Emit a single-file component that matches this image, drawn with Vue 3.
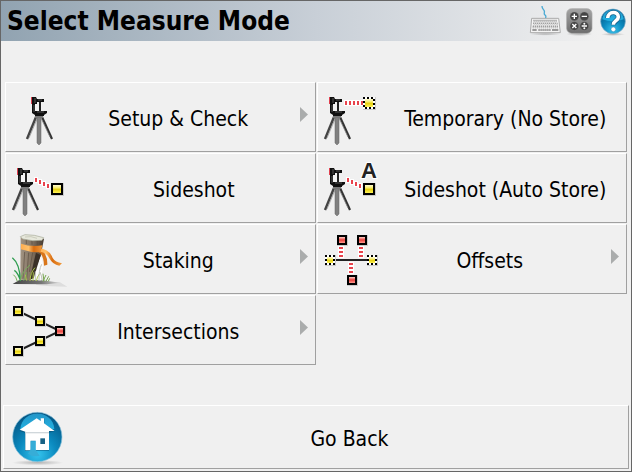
<script setup>
import { ref } from 'vue'

const selected = ref('')

const modes = [
  { id: 'setup', label: 'Setup & Check', submenu: true },
  { id: 'temporary', label: 'Temporary (No Store)', submenu: false },
  { id: 'sideshot', label: 'Sideshot', submenu: false },
  { id: 'auto', label: 'Sideshot (Auto Store)', submenu: false },
  { id: 'staking', label: 'Staking', submenu: true },
  { id: 'offsets', label: 'Offsets', submenu: true },
  { id: 'intersections', label: 'Intersections', submenu: true }
]

// survey points and sight lines drawn in each icon
const points = {
  temporary: [{ x: 46, y: 15, size: 12, color: 'yellow', dashed: true }],
  sideshot: [{ x: 46, y: 30, size: 12, color: 'yellow' }],
  auto: [{ x: 46, y: 30, size: 12, color: 'yellow' }],
  offsets: [
    { x: 20, y: 11, size: 10, color: 'red' },
    { x: 40, y: 11, size: 10, color: 'red' },
    { x: 30, y: 51, size: 10, color: 'red' },
    { x: 8, y: 31, size: 10, color: 'yellow', dashed: true },
    { x: 50, y: 31, size: 10, color: 'yellow', dashed: true }
  ],
  intersections: [
    { x: 8, y: 11, size: 10, color: 'yellow' },
    { x: 30, y: 21, size: 10, color: 'yellow' },
    { x: 50, y: 31, size: 10, color: 'red' },
    { x: 30, y: 41, size: 10, color: 'yellow' },
    { x: 8, y: 51, size: 10, color: 'yellow' }
  ]
}

const slope = [[30, 25], [34, 27], [38, 29], [42, 31]]
const ticks = {
  temporary: { w: 2, h: 4, at: [[28, 19], [32, 19], [36, 19], [40, 19], [44, 19]] },
  sideshot: { w: 2, h: 4, at: slope },
  auto: { w: 2, h: 4, at: slope },
  offsets: {
    w: 4,
    h: 2,
    at: [[22, 23], [22, 27], [22, 31], [42, 23], [42, 27], [42, 31], [32, 39], [32, 43], [32, 47]]
  }
}

const hasTripod = (id) => ['setup', 'temporary', 'sideshot', 'auto'].includes(id)

const select = (id) => {
  selected.value = id
}
</script>

<template>
  <div class="window">
    <svg class="defs" width="0" height="0" aria-hidden="true">
      <defs>
        <linearGradient id="yellow" x2="0" y2="1">
          <stop offset="0" stop-color="#fffbd0" />
          <stop offset=".35" stop-color="#f6ec70" />
          <stop offset=".55" stop-color="#e6cf10" />
          <stop offset="1" stop-color="#fff45a" />
        </linearGradient>
        <linearGradient id="red" x2="0" y2="1">
          <stop offset="0" stop-color="#ffd0c8" />
          <stop offset=".5" stop-color="#e8403c" />
          <stop offset="1" stop-color="#ff9c90" />
        </linearGradient>
        <radialGradient id="blue" cx=".5" cy=".85" r=".85">
          <stop offset="0" stop-color="#35c4ee" />
          <stop offset=".45" stop-color="#0b8abf" />
          <stop offset="1" stop-color="#04527f" />
        </radialGradient>
        <linearGradient id="gloss" x2="0" y2="1">
          <stop offset="0" stop-color="#2496c8" />
          <stop offset="1" stop-color="#22b4e4" />
        </linearGradient>
        <linearGradient id="wood">
          <stop offset="0" stop-color="#a29483" />
          <stop offset=".5" stop-color="#80705f" />
          <stop offset="1" stop-color="#453a30" />
        </linearGradient>
        <linearGradient id="ribbon">
          <stop offset="0" stop-color="#ffad50" />
          <stop offset=".35" stop-color="#ffc06a" />
          <stop offset=".6" stop-color="#d96d10" />
          <stop offset="1" stop-color="#f09a3c" />
        </linearGradient>
        <linearGradient id="metal" x2="0" y2="1">
          <stop offset="0" stop-color="#a5a5a5" />
          <stop offset="1" stop-color="#6d6d6d" />
        </linearGradient>
        <linearGradient id="shade">
          <stop offset="0" stop-color="#444" />
          <stop offset=".6" stop-color="#777" />
          <stop offset="1" stop-color="#ddd" />
        </linearGradient>
        <radialGradient id="ground">
          <stop offset="0" stop-color="#999" stop-opacity=".7" />
          <stop offset="1" stop-color="#999" stop-opacity="0" />
        </radialGradient>
      </defs>
    </svg>

    <header>
      <h1>Select Measure Mode</h1>
      <nav>
        <button class="tool" aria-label="Keyboard">
          <svg width="32" height="32" viewBox="0 0 96 96">
            <path d="M39 3C39 13 44 12 46 18S42 25 48 30S49 35 50 41" fill="none" stroke="#49a9d3" stroke-width="4" />
            <ellipse cx="49" cy="87" rx="46" ry="5" fill="url(#ground)" />
            <path d="M8 40H89L94 83H4Z" fill="#f4f4f4" stroke="#aaa" stroke-width="3" />
            <path d="M13 48H85M12 57H86M11 66H87" stroke="#929292" stroke-width="7" stroke-dasharray="4 2" />
            <path d="M10 75H23M27 75H65M69 75H88" stroke="#999" stroke-width="6" />
            <path d="M13 49H85M12 58H86M11 67H87M28 75H64" stroke="#f4f4f4" stroke-width="3" stroke-dasharray="3 3" />
          </svg>
        </button>
        <button class="tool" aria-label="Calculator">
          <svg width="28" height="32" viewBox="0 0 84 96">
            <ellipse cx="40" cy="87" rx="40" ry="6" fill="url(#ground)" />
            <rect x="2" y="11" width="76" height="74" rx="15" fill="url(#metal)" stroke="#a6a6a6" stroke-width="2" />
            <g fill="#454545" stroke="#888" stroke-width="1">
              <circle cx="25" cy="34" r="13" />
              <circle cx="55" cy="34" r="13" />
              <circle cx="25" cy="63" r="13" />
              <circle cx="55" cy="63" r="13" />
            </g>
            <g stroke="#fff" stroke-width="4">
              <path d="M17 34H33M25 26V42M47 34H63M19 57L31 69M31 57L19 69M47 63H63" />
            </g>
            <g fill="#fff"><circle cx="55" cy="56" r="3" /><circle cx="55" cy="70" r="3" /></g>
          </svg>
        </button>
        <button class="tool" aria-label="Help">
          <svg width="28" height="32" viewBox="0 0 84 96">
            <ellipse cx="42" cy="88" rx="36" ry="5" fill="url(#ground)" />
            <circle cx="42" cy="49" r="37" fill="url(#blue)" stroke="#76abc8" stroke-width="2" />
            <path d="M10 43C14 4 70 4 74 43Q42 55 10 43" fill="url(#gloss)" />
            <path d="M26 39C27 18 58 17 58 36C58 47 43 47 43 61" fill="none" stroke="#145f89" stroke-width="15" />
            <path d="M26 39C27 18 58 17 58 36C58 47 43 47 43 59" fill="none" stroke="#fff" stroke-width="11" />
            <circle cx="43" cy="73" r="7" fill="#fff" stroke="#145f89" stroke-width="1" />
          </svg>
        </button>
      </nav>
    </header>

    <main>
      <button
        v-for="mode in modes"
        :key="mode.id"
        class="tile"
        :class="{ selected: selected === mode.id }"
        @click="select(mode.id)"
      >
        <svg class="icon" width="67" height="68" viewBox="1 1 67 68" aria-hidden="true">
          <g v-if="hasTripod(mode.id)" :transform="mode.id === 'setup' ? 'translate(26 15)' : 'translate(12 15)'">
            <path d="M5 20L-4 42" stroke="#444" stroke-width="2.4" />
            <path d="M6 22L-2 41" stroke="#999" stroke-width=".8" />
            <path d="M11 20L21 42" stroke="#333" stroke-width="2.2" />
            <path d="M10 21L19 40" stroke="#888" stroke-width=".8" />
            <path d="M6 20H10V46L8 48L6 46Z" fill="#808080" stroke="#666" stroke-width=".5" />
            <rect x="4" y="17" width="9" height="2" fill="#111" />
            <rect x="4" y="19" width="8" height="2" fill="#777" />
            <rect x="4" y="6" width="7" height="8" fill="#f4f4f4" />
            <path d="M1 0H5L6 2H13V5H6V7H4V14H16V16L13 18H4L1 16Z" fill="#101010" />
            <rect x="8" y="5" width="2" height="9" fill="#222" />
            <path d="M4 1V6M7 3H11M3 8V15M6 15H13" stroke="#555" fill="none" />
            <rect x="0" y="0" width="1" height="7" fill="#e0404f" />
          </g>

          <g v-if="ticks[mode.id]">
            <rect
              v-for="(t, i) in ticks[mode.id].at"
              :key="'h' + i"
              :x="t[0] - 1"
              :y="t[1] - 1"
              :width="ticks[mode.id].w + 2"
              :height="ticks[mode.id].h + 2"
              fill="#fff"
            />
            <rect
              v-for="(t, i) in ticks[mode.id].at"
              :key="'t' + i"
              :x="t[0]"
              :y="t[1]"
              :width="ticks[mode.id].w"
              :height="ticks[mode.id].h"
              fill="#e8434c"
            />
          </g>

          <path v-if="mode.id === 'offsets'" d="M16 36H52" stroke="#222" stroke-width="2" />
          <path
            v-if="mode.id === 'intersections'"
            d="M13 16L55 36L13 56"
            fill="none"
            stroke="#222"
            stroke-width="2"
          />

          <g v-for="(p, i) in points[mode.id]" :key="i">
            <rect :x="p.x" :y="p.y" :width="p.size + 1" :height="p.size + 1" fill="#ccc" />
            <rect :x="p.x" :y="p.y" :width="p.size" :height="p.size" :fill="p.dashed ? '#fff' : '#000'" />
            <rect
              :x="p.x + 2"
              :y="p.y + 2"
              :width="p.size - 4"
              :height="p.size - 4"
              :fill="`url(#${p.color})`"
            />
            <rect
              v-if="p.dashed"
              :x="p.x + 1"
              :y="p.y + 1"
              :width="p.size - 2"
              :height="p.size - 2"
              fill="none"
              stroke="#000"
              stroke-width="2"
              stroke-dasharray="2 2"
              stroke-dashoffset="1"
            />
          </g>

          <text v-if="mode.id === 'auto'" class="letter" x="52" y="25" text-anchor="middle">A</text>

          <!-- wooden stake with flagging tape, on a grid three times finer -->
          <g v-if="mode.id === 'staking'" transform="translate(-5 -2) scale(.3333)">
            <path d="M105 184L180 181L202 194Q150 194 110 189" fill="#ddd" />
            <path d="M38 186L58 174H120L182 182L140 187Z" fill="url(#shade)" />
            <path d="M90 170L122 100L130 128L122 176Z" fill="#fff" opacity=".8" />
            <path d="M62 46L132 50L122 102L92 175L61 173Z" fill="url(#wood)" />
            <path d="M108 92L89 173L101 169L122 100Z" fill="#3b3027" />
            <path d="M74 90L69 170M86 92L80 172M98 92L88 150M79 52V66M96 52V68M112 54V70" stroke="#5c4e41" stroke-width="2" fill="none" />
            <path d="M61 44L75 38L103 40L131 47L126 55L98 56L68 51Z" fill="#e7e8dc" stroke="#a5a796" stroke-width="2" />
            <path d="M75 45Q93 41 111 49" fill="none" stroke="#bbbdab" stroke-width="2" />
            <path d="M110 86Q131 94 132 131L142 128Q143 94 118 78" fill="#d9761a" />
            <path d="M112 79Q146 78 158 108Q166 121 186 124L178 131Q158 128 148 109Q139 88 112 89" fill="url(#ribbon)" />
            <path d="M63 65Q92 75 127 70L122 91Q91 92 63 82Z" fill="url(#ribbon)" />
            <g fill="none">
              <path d="M61 177Q60 125 37 107M62 177Q53 151 43 145" stroke="#2f9d50" stroke-width="4" />
              <path d="M60 176Q67 147 90 129M71 176Q81 160 79 150M52 178Q48 163 40 158" stroke="#74ac57" stroke-width="3" />
              <path d="M80 176L76 158M90 177Q91 152 105 137M99 177L100 151M109 177Q111 165 119 155" stroke="#a9c34a" stroke-width="3" />
              <path d="M106 176V148M117 177Q116 144 125 127M127 177Q125 161 120 150" stroke="#bfc2b9" stroke-width="3" />
              <path d="M132 178L129 155M138 178L146 163M145 178L149 169M129 178L138 159" stroke="#77a650" stroke-width="3" />
            </g>
          </g>
        </svg>
        <span class="label">{{ mode.label }}</span>
        <svg v-if="mode.submenu" class="arrow" width="8" height="15" viewBox="0 0 8 15" aria-hidden="true">
          <path d="M0 0L8 7.5L0 15Z" fill="#aaacac" />
        </svg>
      </button>
    </main>

    <footer>
      <button class="tile" @click="select('')">
        <svg class="icon" width="67" height="62" viewBox="1 1 67 62" aria-hidden="true">
          <g transform="translate(-3 -10) scale(.3333)">
            <ellipse cx="113" cy="203" rx="77" ry="8" fill="url(#ground)" />
            <circle cx="112" cy="126" r="74" fill="url(#blue)" stroke="#8cc4dd" stroke-width="2" />
            <path d="M61 102C66 40 158 40 163 102Q112 120 61 102" fill="url(#gloss)" />
            <path d="M59 108L110 72L121 79V71H133V86L165 108L147 113V167H108V137H92V168H75V113Z" fill="#064b70" opacity=".6" />
            <path d="M59 104L110 70L122 78V70H132V85L164 108H147V165H107V137H92V166H76V110Z" fill="#fff" />
            <path d="M76 111H147V115H76Z" fill="#d0d7db" />
            <rect x="121" y="130" width="14" height="17" fill="#176184" />
            <path d="M92 139H106V163L119 182Q98 187 84 176L92 163Z" fill="#37add7" />
          </g>
        </svg>
        <span class="label">Go Back</span>
      </button>
    </footer>
  </div>
</template>

<style>
body {
  margin: 0;
  background: #f0f0f0;
}
</style>

<style scoped>
.window {
  box-sizing: border-box;
  min-height: 100vh;
  display: flex;
  flex-direction: column;
  border: 1px solid #666;
  background: #f0f0f0;
  color: #000;
  font-family: 'DejaVu Sans Condensed', 'DejaVu Sans', sans-serif;
}

.defs {
  position: absolute;
}

header {
  height: 40px;
  display: flex;
  align-items: center;
  justify-content: space-between;
  padding: 0 4px 0 6px;
  background: linear-gradient(to right, #91a3b1, #c8cfd7 50%, #f0f0f0 95%);
}

h1 {
  margin: 0;
  font-size: 26px;
  line-height: 32px;
  font-weight: bold;
}

nav {
  display: flex;
  gap: 5px;
}

.tool {
  display: flex;
  padding: 0;
  border: none;
  background: none;
  cursor: pointer;
}

main {
  flex: 1;
  display: grid;
  grid-template-columns: 1fr 1fr;
  grid-auto-rows: 70px;
  align-content: start;
  gap: 1px;
  padding: 41px 4px 40px;
}

.tile {
  display: flex;
  align-items: center;
  min-width: 0;
  padding: 0;
  border: 1px solid;
  border-color: #fff #a0a0a0 #a0a0a0 #fff;
  background: #f0f0f0;
  color: inherit;
  font-family: inherit;
  font-size: 21px;
  line-height: 24px;
  cursor: pointer;
}

.tile:active,
.tile.selected {
  border-color: #a0a0a0 #fff #fff #a0a0a0;
}

.icon {
  flex: none;
}

.label {
  flex: 1;
  padding-top: 4px;
}

.arrow {
  flex: none;
  margin: 0 7px 5px 16px;
}

.letter {
  font-family: 'Liberation Sans', sans-serif;
  font-size: 22px;
  font-weight: bold;
  fill: #222;
  stroke: #fff;
  stroke-width: 2px;
  paint-order: stroke;
}

footer {
  display: flex;
  padding: 0 2px 2px;
}

footer .tile {
  flex: 1;
  height: 64px;
}
</style>
